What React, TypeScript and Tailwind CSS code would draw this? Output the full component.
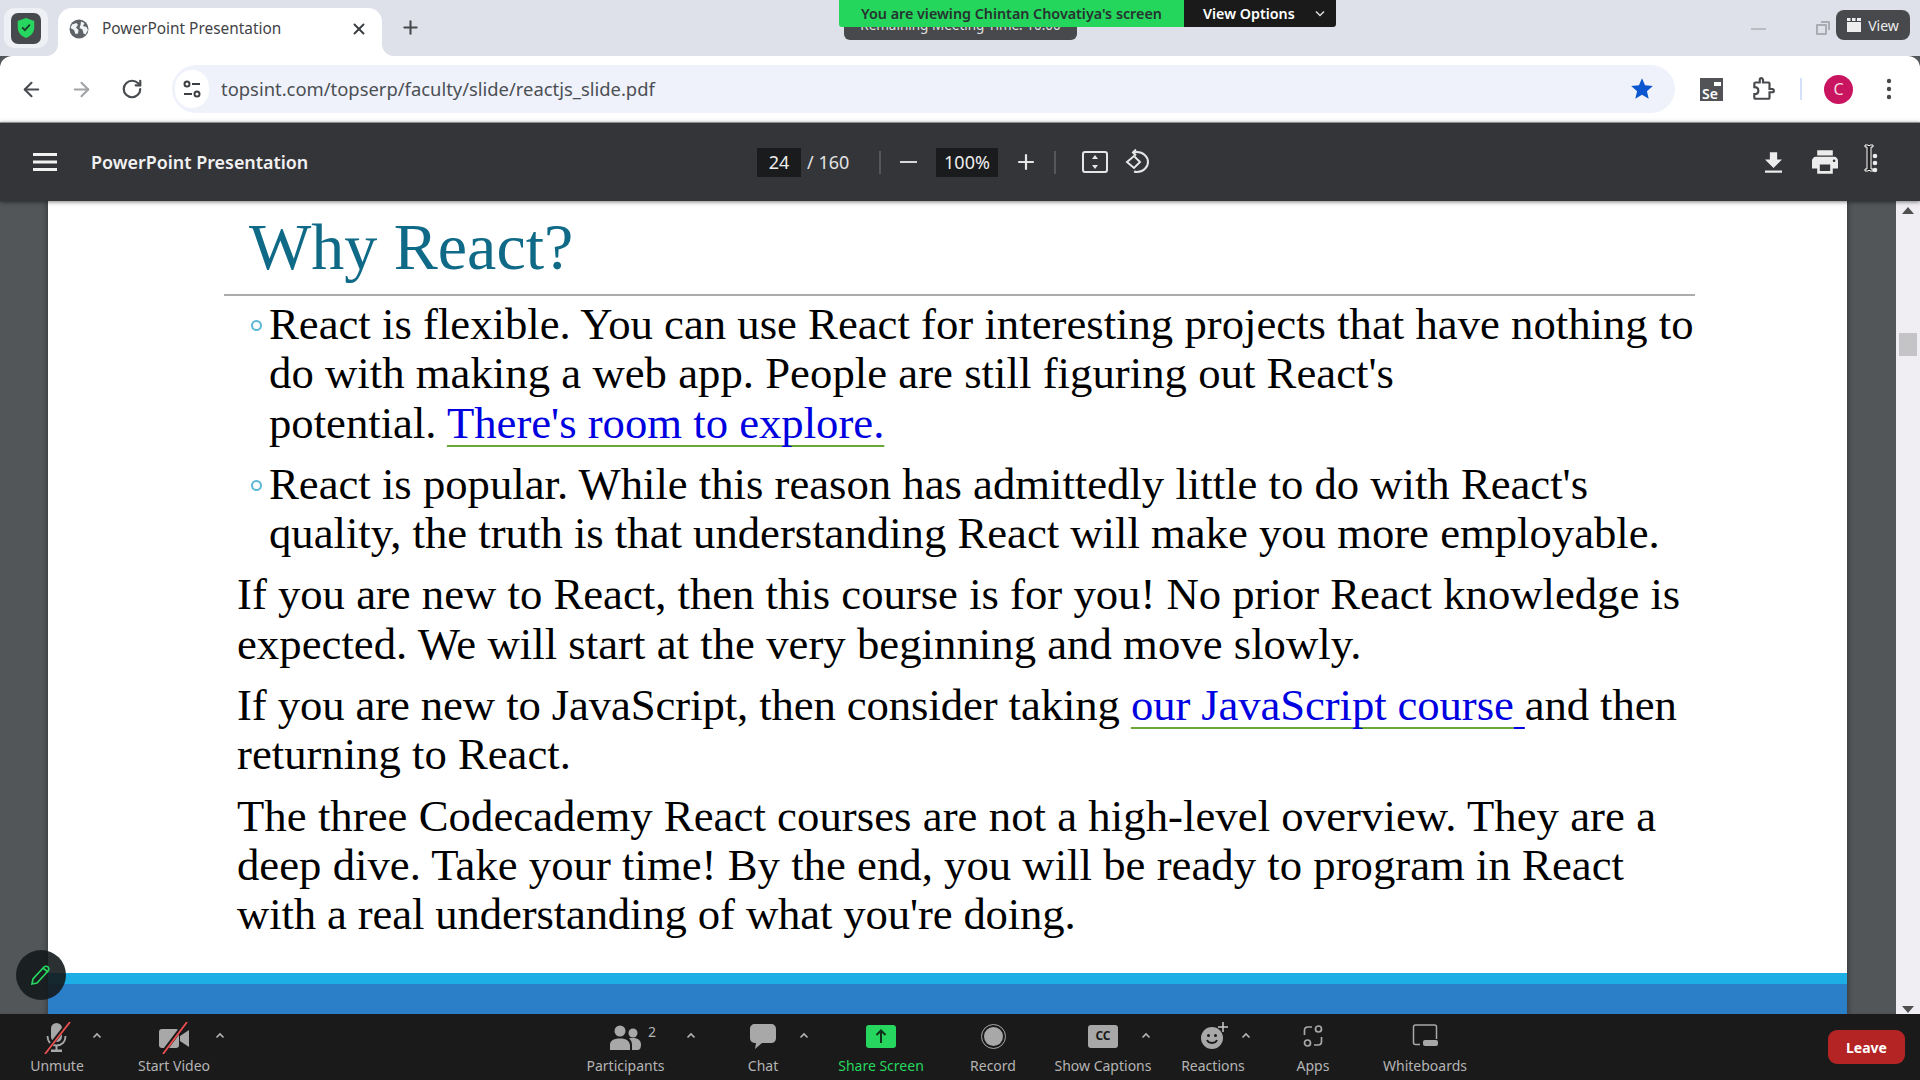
import React from "react";
import { ArrowLeft, ArrowRight, RotateCw, X, Plus } from "lucide-react";

const Caret = ({ className }: { className: string }) => (
  <svg width="10" height="7" viewBox="0 0 10 7" className={"absolute top-[18px] " + className}>
    <path d="M1.5 5.5 5 2l3.5 3.5" fill="none" stroke="#b5b5b5" strokeWidth="1.6" />
  </svg>
);

const ToolItem = ({
  label,
  className,
  green,
  children,
  caret,
}: {
  label: string;
  className: string;
  green?: boolean;
  children: React.ReactNode;
  caret?: string;
}) => (
  <div className={"relative flex shrink-0 flex-col items-center " + className}>
    <div className="flex h-[43px] items-center justify-center pt-[4px]">{children}</div>
    {caret && <Caret className={caret} />}
    <span className={"whitespace-nowrap text-[14px] leading-[18px] " + (green ? "text-[#27d65e]" : "text-[#b4b4b4]")}>{label}</span>
  </div>
);

const Line = ({ children, className = "" }: { children: React.ReactNode; className?: string }) => (
  <div className={"h-[49.3px] whitespace-nowrap leading-[49.3px] " + className}>{children}</div>
);

const Bullet = () => <span className="mt-[20px] mr-[7px] block h-[11px] w-[11px] shrink-0 rounded-full border-2 border-[#5db8d8]" />;

export default function App() {
  return (
    <div className="relative flex h-[1080px] w-[1920px] flex-col overflow-hidden bg-[#525659] font-['Noto_Sans',sans-serif]">
      {/* tab strip */}
      <div className="relative flex h-[56px] shrink-0 items-end bg-[#dee1e9]">
        <div className="mb-[8px] ml-[4px] flex h-[40px] w-[44px] items-center justify-center rounded-[10px] bg-[#eef0f5]">
          <div className="flex h-[31px] w-[30px] items-center justify-center rounded-[7px] bg-[#474a4d]">
            <svg width="20" height="22" viewBox="0 0 18 20">
              <path d="M9 1 16.5 3.6V9.5c0 4.6-3.2 7.8-7.5 9.5C4.700 17.300 1.500 14.100 1.500 9.500V3.600z" fill="#27d65e" />
              <path d="M5.500 9.500 8 12l4.500-5" fill="none" stroke="#1d3b28" strokeWidth="1.600" />
            </svg>
          </div>
        </div>
        <div className="relative ml-[10px] flex h-[48px] w-[324px] items-center rounded-t-[14px] bg-white pb-[6px] pl-[11px] pr-[14px]">
          <svg width="20" height="20" viewBox="0 0 20 20" className="shrink-0">
            <circle cx="10" cy="10" r="9.500" fill="#5f6368" />
            <path d="M3 5.500 7.500 4 9 6 7 8.500 9.500 11 9 14.500 6.500 15 5 11 1.500 9zM12 2.500l3.500 1.500-1.500 3 3.500 1 1.500 3-2.500 4.500-2-1-1-4-3-1.500 1-3z" fill="#f1f3f4" />
          </svg>
          <span className="ml-[13px] text-[15.400px] text-[#3f4347]">PowerPoint Presentation</span>
          <X size={18} strokeWidth={2.600} className="ml-auto text-[#3c4043]" />
          <div className="absolute -right-[12px] bottom-[0px] h-[12px] w-[12px] bg-white">
            <div className="h-full w-full rounded-bl-[12px] bg-[#dee1e9]" />
          </div>
          <div className="absolute -left-[12px] bottom-[0px] h-[12px] w-[12px] bg-white">
            <div className="h-full w-full rounded-br-[12px] bg-[#dee1e9]" />
          </div>
        </div>
        <Plus size={21} strokeWidth={2.400} className="mb-[18px] ml-[18px] text-[#474a4d]" />
        <div className="ml-auto mb-[26px] mr-[50px] h-[2px] w-[15px] bg-[#b9bcc2]" />
        <div className="relative mb-[21px] mr-[90px] h-[14px] w-[14px]">
          <div className="absolute bottom-[0px] left-[0px] h-[11px] w-[11px] rounded-[1px] border-2 border-[#a9acb2]" />
          <div className="absolute right-[0px] top-[0px] h-[9px] w-[9px] rounded-tr-[2px] border-r-2 border-t-2 border-[#a9acb2]" />
        </div>
      </div>

      {/* chrome toolbar */}
      <div className="flex h-[66px] shrink-0 items-center rounded-t-[12px] bg-white">
        <ArrowLeft size={23} strokeWidth={2.200} className="ml-[20px] text-[#484b4f]" />
        <ArrowRight size={23} strokeWidth={2.200} className="ml-[27px] text-[#a0a3a6]" />
        <RotateCw size={22} strokeWidth={2.400} className="ml-[28px] text-[#484b4f]" />
        <div className="ml-[29px] flex h-[48px] w-[1503px] items-center rounded-full bg-[#eff2fa] pl-[3px] pr-[20px]">
          <div className="flex h-[38px] w-[34px] items-center justify-center rounded-full bg-white">
            <svg width="20" height="18" viewBox="0 0 20 18" fill="none" stroke="#3c4043" strokeWidth="2">
              <circle cx="5" cy="4" r="2.500" />
              <path d="M10 4h8M2 14h8" />
              <circle cx="15" cy="14" r="2.500" />
            </svg>
          </div>
          <span className="ml-[12px] text-[18.400px] text-[#4b4f54]">topsint.com/topserp/faculty/slide/reactjs_slide.pdf</span>
          <svg width="26" height="26" viewBox="0 0 24 24" className="ml-auto" fill="#0b57d0">
            <path d="M12 17.270 18.180 21l-1.640-7.030L22 9.240l-7.190-.610L12 2 9.190 8.630 2 9.240l5.460 4.730L5.820 21z" />
          </svg>
        </div>
        <div className="relative ml-[25px] h-[23px] w-[23px] bg-[#515357]">
          <span className="absolute bottom-[0px] left-[2px] text-[14px] font-semibold leading-[15px] text-white">Se</span>
          <span className="absolute right-[2px] top-[4px] h-[4px] w-[7px] bg-white" />
        </div>
        <svg width="26" height="26" viewBox="0 0 24 24" className="ml-[27px]" fill="none" stroke="#474a4d" strokeWidth="2">
          <path d="M20.500 12H18V7c0-.6-.4-1-1-1h-5V3.500C12 2.700 11.300 2 10.500 2S9 2.700 9 3.500V6H5c-.6 0-1 .4-1 1v3.200c2.200 0 3.700 1.400 3.700 3.300S6.200 16.800 4 16.800V20c0 .6.4 1 1 1h12c.6 0 1-.4 1-1v-5h2.500c.8 0 1.500-.7 1.500-1.500s-.7-1.500-1.500-1.500z" />
        </svg>
        <div className="ml-[24px] h-[22px] w-[2px] bg-[#d3e0f8]" />
        <div className="ml-[22px] flex h-[29px] w-[29px] items-center justify-center rounded-full bg-[#c9155f] text-[16px] text-[#f5d5e2]">C</div>
        <svg width="6" height="22" viewBox="0 0 6 22" className="ml-[33px]" fill="#474a4d">
          <circle cx="3" cy="3" r="2.200" />
          <circle cx="3" cy="11" r="2.200" />
          <circle cx="3" cy="19" r="2.200" />
        </svg>
      </div>

      {/* pdf toolbar */}
      <div className="relative z-10 flex h-[79px] shrink-0 items-center border-t border-[#8d8e91] bg-[#343539] shadow-[0_1px_4px_rgba(0,0,0,0.5)]">
        <svg width="24" height="18" viewBox="0 0 24 18" className="ml-[33px]" fill="#f1f1f1">
          <rect width="24" height="3" />
          <rect y="7.500" width="24" height="3" />
          <rect y="15" width="24" height="3" />
        </svg>
        <span className="ml-[34px] w-[217px] whitespace-nowrap text-[17.900px] font-semibold text-[#f1f1f1]">PowerPoint Presentation</span>
        <div className="ml-[449px] flex h-[29px] w-[44px] items-center justify-center bg-[#191b1d] text-[18px] text-[#eee]">24</div>
        <span className="ml-[6px] w-[72px] text-[18px] text-[#e3e3e3]">/ 160</span>
        <div className="h-[23px] w-[2px] bg-[#55585b]" />
        <div className="ml-[19px] h-[2.500px] w-[17px] bg-[#d8d8d8]" />
        <div className="ml-[19px] flex h-[29px] w-[62px] items-center justify-center bg-[#191b1d] text-[18px] text-[#eee]">100%</div>
        <Plus size={24} strokeWidth={2.200} className="ml-[16px] text-[#e6e6e6]" />
        <div className="ml-[16px] h-[23px] w-[2px] bg-[#55585b]" />
        <svg width="26" height="22" viewBox="0 0 26 22" className="ml-[26px]" fill="none" stroke="#e6e6e6" strokeWidth="2">
          <rect x="1" y="1" width="24" height="20" rx="2" />
          <path d="M13 4 10 8h6zM13 18l-3-4h6z" fill="#e6e6e6" stroke="none" />
        </svg>
        <svg width="26" height="26" viewBox="0 0 26 26" className="ml-[17px]" fill="none" stroke="#e6e6e6" strokeWidth="2">
          <path d="M2 13 9 7l6 6-6 6z" />
          <path d="M8 3.500c1.500-.5 3-.5 4-.5 6 0 11 4.500 11 10s-5 10-11 10c-1 0-2-.2-3-.5" />
          <path d="M11 .5 8 3.500l3 3" />
        </svg>
        <svg width="17" height="21" viewBox="5 3 14 17" className="ml-auto" fill="#ececec">
          <path d="M19 9h-4V3H9v6H5l7 7 7-7zM5 18v2h14v-2H5z" />
        </svg>
        <svg width="26" height="24" viewBox="2 3 20 18" className="ml-[30px]" fill="#ececec">
          <path d="M19 8H5c-1.660 0-3 1.340-3 3v6h4v4h12v-4h4v-6c0-1.660-1.340-3-3-3zm-3 11H8v-5h8v5zm3-7c-.550 0-1-.450-1-1s.450-1 1-1 1 .450 1 1-.450 1-1 1zm-1-9H6v4h12V3z" />
        </svg>
        <svg width="16" height="30" viewBox="0 0 16 30" className="mb-[6px] ml-[25px] mr-[41px]">
          <circle cx="12" cy="12" r="2.300" fill="#ececec" />
          <circle cx="12" cy="19" r="2.300" fill="#ececec" />
          <circle cx="12" cy="26" r="2.300" fill="#ececec" />
          <path d="M2 1h3l1 1 1-1h3v2H8v22h2v2H7l-1-1-1 1H2v-2h2V3H2z" fill="#222" stroke="#fff" strokeWidth="1" />
        </svg>
      </div>

      {/* document viewport */}
      <div className="relative flex min-h-0 flex-1">
        <div className="w-[48px] shrink-0 bg-[#525659] shadow-[inset_-4px_0_4px_-2px_rgba(0,0,0,0.25)]" />
        <div className="flex w-[1799px] shrink-0 flex-col bg-white font-['Liberation_Serif',serif] text-black">
          <div className="flex-1 pt-[8px] text-[44.700px]">
            <h1 className="ml-[201px] text-[66px] font-normal leading-[76px] text-[#0f6a87]">Why React?</h1>
            <div className="ml-[176px] mt-[9px] h-[2px] w-[1471px] bg-[#acacac]" />
            <div className="ml-[203px] mt-[4px] flex">
              <Bullet />
              <div>
                <Line className="tracking-[0.015px]">React is flexible. You can use React for interesting projects that have nothing to</Line>
                <Line className="tracking-[0.04px]">do with making a web app. People are still figuring out React's</Line>
                <Line>
                  potential.{" "}
                  <span className="text-[#0000e0] underline decoration-[#6aa83a] decoration-2 underline-offset-[7px] [text-decoration-skip-ink:none]">There's room to explore.</span>
                </Line>
              </div>
            </div>
            <div className="ml-[203px] mt-[12px] flex">
              <Bullet />
              <div>
                <Line>React is popular. While this reason has admittedly little to do with React's</Line>
                <Line>quality, the truth is that understanding React will make you more employable.</Line>
              </div>
            </div>
            <div className="ml-[189px] mt-[12px]">
              <Line>If you are new to React, then this course is for you! No prior React knowledge is</Line>
              <Line className="tracking-[0.04px]">expected. We will start at the very beginning and move slowly.</Line>
            </div>
            <div className="ml-[189px] mt-[12px]">
              <Line className="tracking-[-0.09px]">
                If you are new to JavaScript, then consider taking{" "}
                <span className="text-[#0000e0] underline decoration-[#6aa83a] decoration-2 underline-offset-[7px] [text-decoration-skip-ink:none]">our JavaScript course</span>
                <span className="underline decoration-[#0000e0] decoration-2 underline-offset-[7px]"> </span>and then
              </Line>
              <Line>returning to React.</Line>
            </div>
            <div className="ml-[189px] mt-[12px]">
              <Line className="tracking-[0.06px]">The three Codecademy React courses are not a high-level overview. They are a</Line>
              <Line className="tracking-[0.03px]">deep dive. Take your time! By the end, you will be ready to program in React</Line>
              <Line className="tracking-[-0.125px]">with a real understanding of what you're doing.</Line>
            </div>
          </div>
          <div className="h-[11px] shrink-0 bg-[#1eaee6]" />
          <div className="h-[30px] shrink-0 bg-[#2a7fc8]" />
        </div>
        <div className="w-[49px] shrink-0 bg-[#525659] shadow-[inset_4px_0_4px_-2px_rgba(0,0,0,0.25)]" />
        <div className="flex w-[24px] shrink-0 flex-col items-center bg-[#f0eef3] pt-[6px]">
          <svg width="12" height="7" viewBox="0 0 12 7" fill="#505050">
            <path d="M6 0l6 7H0z" />
          </svg>
          <div className="mt-[119px] h-[23px] w-[18px] bg-[#c4c4c6]" />
          <svg width="12" height="7" viewBox="0 0 12 7" fill="#505050" className="mt-auto mb-[1px]">
            <path d="M6 7l6-7H0z" />
          </svg>
        </div>
        {/* annotation pen */}
        <div className="absolute bottom-[14px] left-[16px] flex h-[50px] w-[50px] items-center justify-center rounded-full bg-[#141a1c]/90">
          <svg width="22" height="22" viewBox="0 0 22 22" fill="none" stroke="#27d65e" strokeWidth="1.700">
            <path d="M2 20l1-5L14 3c1-1 3-1 4 0s1 3 0 4L7 19z" />
            <path d="M13 4l5 4" />
          </svg>
        </div>
      </div>

      {/* zoom toolbar */}
      <div className="flex h-[66px] shrink-0 bg-[#1a1a1a] font-['Noto_Sans',sans-serif]">
        <ToolItem label="Unmute" className="ml-[27px] w-[60px]" caret="left-[65px]">
          <svg width="32" height="32" viewBox="0 0 32 32" fill="#a8a8a8">
            <rect x="10" y="1" width="11" height="19" rx="5.500" />
            <path d="M6.500 14c0 6 4 9.500 9 9.500s9-3.500 9-9.500" fill="none" stroke="#a8a8a8" strokeWidth="1.800" />
            <rect x="14.500" y="23" width="2" height="5" />
            <rect x="10" y="27.500" width="11" height="2.500" />
            <path d="M28 0 3 32" stroke="#1a1a1a" strokeWidth="4" />
            <path d="M29 0 4 32" stroke="#ee4f4f" strokeWidth="1.800" />
          </svg>
        </ToolItem>
        <ToolItem label="Start Video" className="ml-[49px] w-[76px]" caret="left-[79px]">
          <svg width="32" height="32" viewBox="0 0 32 32" fill="#a8a8a8">
            <rect x="1" y="7" width="20" height="19" rx="3" />
            <path d="M22 14l9-6v17l-9-6z" />
            <path d="M28 0 4 32" stroke="#1a1a1a" strokeWidth="4" />
            <path d="M29 0 5 32" stroke="#ee4f4f" strokeWidth="1.800" />
          </svg>
        </ToolItem>
        <ToolItem label="Participants" className="ml-[373px] w-[81px]" caret="left-[101px]">
          <div className="relative flex items-center">
            <svg width="31" height="25" viewBox="0 0 31 25" fill="#a8a8a8">
              <circle cx="10" cy="6" r="5.500" />
              <circle cx="23" cy="8" r="4.500" />
              <path d="M0 25v-5c0-4 3-6.500 10-6.500s9 2.500 10 6.500v5z" />
              <path d="M22 25v-5c0-3-1-5-3-6.500 1-.500 3-.5 4-.5 5 0 8 2.500 8 6.500 0 3-1 5.500-3 5.500z" />
            </svg>
            <span className="absolute -right-[15px] -top-[2px] text-[14px] leading-[18px] text-[#b4b4b4]">2</span>
          </div>
        </ToolItem>
        <ToolItem label="Chat" className="ml-[79px] w-[36px]" caret="left-[54px]">
          <svg width="26" height="25" viewBox="0 0 26 25" fill="#a8a8a8" className="mb-[2px]">
            <path d="M5 0h16c3 0 5 2 5 5v9c0 3-2 5-5 5H12l-7 6 1-6c-4 0-6-2-6-5V5c0-3 2-5 5-5z" />
          </svg>
        </ToolItem>
        <ToolItem label="Share Screen" green className="ml-[55px] w-[90px]">
          <div className="mb-[3px] flex h-[23px] w-[30px] items-center justify-center rounded-[3px] bg-[#27d65e]">
            <svg width="12" height="14" viewBox="0 0 12 14" fill="none" stroke="#10301c" strokeWidth="2">
              <path d="M6 14V2M1.500 6 6 1.500 10.500 6" />
            </svg>
          </div>
        </ToolItem>
        <ToolItem label="Record" className="ml-[42px] w-[50px]">
          <div className="mb-[3px] flex h-[25px] w-[25px] items-center justify-center rounded-full border border-[#a8a8a8]">
            <div className="h-[19px] w-[19px] rounded-full bg-[#a8a8a8]" />
          </div>
        </ToolItem>
        <ToolItem label="Show Captions" className="ml-[34px] w-[102px]" caret="left-[89px]">
          <div className="mb-[3px] flex h-[23px] w-[30px] items-center justify-center rounded-[3px] bg-[#a8a8a8] text-[12px] font-bold text-[#1a1a1a]">CC</div>
        </ToolItem>
        <ToolItem label="Reactions" className="ml-[26px] w-[66px]" caret="left-[61px]">
          <svg width="28" height="28" viewBox="0 0 28 28" className="mb-[3px] ml-[4px]">
            <circle cx="11" cy="16" r="11" fill="#a8a8a8" />
            <circle cx="7.500" cy="13.500" r="1.500" fill="#1a1a1a" />
            <circle cx="14.500" cy="13.500" r="1.500" fill="#1a1a1a" />
            <path d="M6 18c1.500 4 8.500 4 10 0" fill="none" stroke="#1a1a1a" strokeWidth="1.800" />
            <path d="M22 0v10M17 5h10" stroke="#1a1a1a" strokeWidth="4" />
            <path d="M22 0v10M17 5h10" stroke="#c9c9c9" strokeWidth="1.500" />
          </svg>
        </ToolItem>
        <ToolItem label="Apps" className="ml-[49px] w-[36px]">
          <svg width="20" height="24" viewBox="0 0 20 24" fill="none" stroke="#a8a8a8" strokeWidth="1.700" className="mb-[3px]">
            <circle cx="15.500" cy="5" r="3" />
            <circle cx="4.500" cy="19" r="3" />
            <path d="M9 3H5C3 3 1.500 4.500 1.500 6.500V11M11 21h4c2 0 3.500-1.500 3.500-3.500V13" />
          </svg>
        </ToolItem>
        <ToolItem label="Whiteboards" className="ml-[50px] w-[88px]">
          <svg width="26" height="24" viewBox="0 0 26 24" fill="none" className="mb-[3px]">
            <path d="M8 20.500H3.500c-1.200 0-2-.8-2-2V3c0-1.200.8-2 2-2h19c1.200 0 2 .8 2 2v12" stroke="#a8a8a8" strokeWidth="1.500" />
            <rect x="11" y="16" width="15" height="6" rx="2" fill="#a8a8a8" />
          </svg>
        </ToolItem>
        <div className="ml-auto mr-[15px] mt-[16px] flex h-[34px] w-[77px] items-center justify-center rounded-[9px] bg-[#b52424] text-[14px] font-bold text-white">Leave</div>
      </div>

      {/* meeting overlays */}
      <div className="absolute left-[844px] top-[14px] flex h-[26px] w-[233px] items-end justify-center rounded-b-[6px] bg-[#47494c] pb-[7px] text-[13.500px] leading-[16px] text-[#e2e2e2]">Remaining Meeting Time: 10:00</div>
      <div className="absolute left-[839px] top-[0px] flex h-[27px] text-[14.300px] font-semibold">
        <div className="flex w-[345px] items-center justify-center rounded-bl-[3px] bg-[#24d65c] text-[#263330]">You are viewing Chintan Chovatiya's screen</div>
        <div className="flex w-[152px] items-center rounded-br-[3px] bg-[#1a1a1a] pl-[19px] text-white">
          View Options
          <svg width="10" height="7" viewBox="0 0 10 7" className="ml-[20px]" fill="none" stroke="#ddd" strokeWidth="1.500">
            <path d="M1 1.500 5 5.500 9 1.500" />
          </svg>
        </div>
      </div>
      <div className="absolute right-[10px] top-[10px] flex h-[30px] w-[74px] items-center justify-center gap-[7px] rounded-[8px] bg-[#47494c] text-[14px] text-[#eee]">
        <svg width="14" height="14" viewBox="0 0 14 14" fill="#eee">
          <rect y="4" width="14" height="10" />
          <rect width="3.500" height="3" />
          <rect x="5" width="3.500" height="3" />
          <rect x="10" width="4" height="3" />
        </svg>
        View
      </div>
    </div>
  );
}
